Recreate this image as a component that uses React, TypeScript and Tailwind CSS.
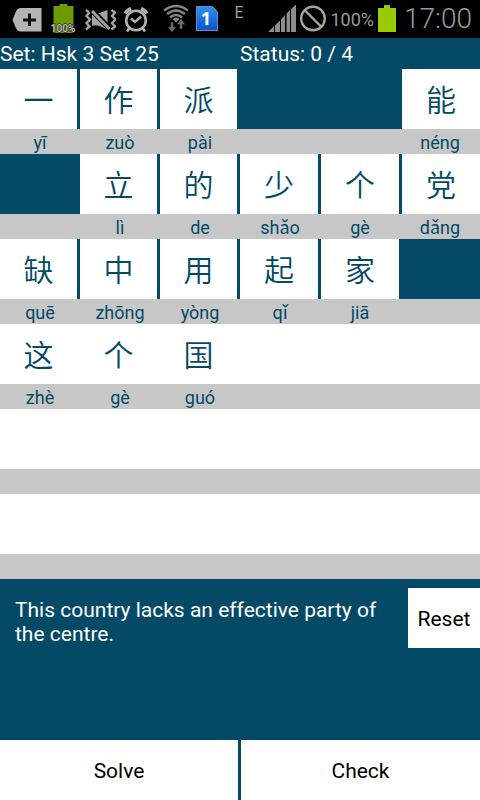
import React from "react";

type Tile = { char: string; pinyin: string } | null;

const t = (char: string, pinyin: string): Tile => ({ char, pinyin });

const POOL: Tile[][] = [
  [t("一", "yī"), t("作", "zuò"), t("派", "pài"), null, null, t("能", "néng")],
  [null, t("立", "lì"), t("的", "de"), t("少", "shǎo"), t("个", "gè"), t("党", "dǎng")],
  [t("缺", "quē"), t("中", "zhōng"), t("用", "yòng"), t("起", "qǐ"), t("家", "jiā"), null],
];

const ANSWER: Tile[][] = [
  [t("这", "zhè"), t("个", "gè"), t("国", "guó"), null, null, null],
  [null, null, null, null, null, null],
  [null, null, null, null, null, null],
];

function StatusBar() {
  return (
    <div className="flex h-[38px] items-center justify-between bg-black pl-3 pr-2 text-[#9a9a9a]">
      <div className="flex items-center gap-2">
        <svg width="30" height="38" viewBox="0 0 30 38" aria-hidden="true">
          <path d="M8 8H29.5V31.500H8Q5 31 3.500 27L0.500 20L3.500 12.500Q5 8.500 8 8Z" fill="#b4b4b4" />
          <path d="M17.500 13.500V26M11 20H24" stroke="#111" strokeWidth="3" />
        </svg>
        <svg width="26" height="38" viewBox="0 0 26 38" aria-hidden="true">
          <path d="M9.500 4H17.500V6H23.500V33H3.500V6H9.500Z" fill="#6d9a00" />
          <text x="13" y="32" textAnchor="middle" fontSize="10" fontWeight="500" fill="#c4c8b4" stroke="#333" strokeWidth="1.500" paintOrder="stroke">100%</text>
        </svg>
        <svg width="32" height="38" viewBox="0 0 32 38" fill="none" stroke="#a4a4a4" strokeWidth="2.400" aria-hidden="true">
          <path d="M2 10L5.500 12.500L2.500 16L6 19.500L2.500 23L5.500 26.500L2 29.500" />
          <path d="M27.500 10L31 12.500L28 16L31.500 19.500L28 23L31 26.500L27.500 29.500" />
          <path d="M8 13.500H14L23.500 10V29.500L14 25.500H8Z" fill="#a4a4a4" stroke="none" />
          <path d="M7 9.500L26 29" stroke="#000" strokeWidth="5.500" />
          <path d="M8 11L25.500 29" strokeWidth="2.800" />
        </svg>
        <svg width="24" height="38" viewBox="0 0 24 38" fill="none" stroke="#b0b0b0" aria-hidden="true">
          <circle cx="12" cy="20.500" r="9.800" strokeWidth="2.600" />
          <path d="M7 18.500L11 22L17 16.500" strokeWidth="2.400" />
          <path d="M1.200 13.500A14 14 0 0 1 7 8.500M17 8.500A14 14 0 0 1 22.800 13.500" strokeWidth="3.600" />
          <path d="M5.500 28L3 31.500M18.500 28L21 31.500" strokeWidth="2.800" />
        </svg>
        <svg width="32" height="38" viewBox="0 0 32 38" fill="none" stroke="#848484" strokeWidth="2.400" aria-hidden="true">
          <path d="M8 10.500Q20 1.500 32 10.500M11 14Q20 7 29 14M14 17.500Q20 12.500 26 17.500" />
          <path d="M16.500 19Q20 16 23.500 19L20 22.500Z" fill="#848484" stroke="none" />
          <path d="M14.500 22H17.500V27H20.500L16 32.500L11.500 27H14.500Z" fill="#6a6a6a" stroke="#000" strokeWidth="0.500" />
          <path d="M23.500 29V24.500H20.500L25 18.500L29.500 24.500H26.500V29Z" fill="#6a6a6a" stroke="#000" strokeWidth="0.500" />
        </svg>
        <svg width="22" height="38" viewBox="0 0 22 38" aria-hidden="true">
          <defs>
            <linearGradient id="sim" x1="0" y1="0" x2="0" y2="1">
              <stop offset="0" stopColor="#2f8df2" />
              <stop offset="1" stopColor="#0b55c8" />
            </linearGradient>
          </defs>
          <path d="M0.500 6.500H16.500L21.500 12V30.500H0.500Z" fill="url(#sim)" stroke="#5f8fc8" />
          <text x="10" y="25" textAnchor="middle" fontSize="18" fontWeight="700" fill="#fff" fontFamily="Open Sans, sans-serif">1</text>
        </svg>
        <span className="w-[26px] pb-3 text-center text-base leading-4">E</span>
      </div>
      <div className="flex items-center gap-1">
        <svg width="28" height="38" viewBox="0 0 28 38" fill="#8c8c8c" aria-hidden="true">
          <path d="M0 32L6 26V32ZM7 25.500L12 20.500V32H7ZM13 19.500L17 15V32H13ZM18.500 13.500L22 10V32H18.500ZM23 9L28 4.500V32H23Z" />
        </svg>
        <svg width="26" height="38" viewBox="1 0 26 38" fill="none" stroke="#a4a4a4" strokeWidth="2.400" aria-hidden="true">
          <circle cx="14" cy="18.500" r="11.800" />
          <path d="M5.500 10L22.500 27" />
        </svg>
        <span className="pt-px text-[18px] leading-6">100%</span>
        <svg width="18" height="38" viewBox="0 0 18 38" aria-hidden="true">
          <path d="M6 5H12V8H18V32H0V8H6Z" fill="#99cc00" />
        </svg>
        <span className="pl-1 text-[28px] font-light leading-8">17:00</span>
      </div>
    </div>
  );
}

function TileRow({ tiles, answer = false }: { tiles: Tile[]; answer?: boolean }) {
  return (
    <div>
      <div className={`grid h-[60px] grid-cols-[77fr_77fr_77fr_78fr_78fr_78fr] gap-[3px] ${answer ? "bg-white" : "bg-[#044a66]"}`}>
        {tiles.map((tile, i) =>
          tile ? (
            <button
              key={i}
              type="button"
              className="bg-white pb-[3px] font-['Noto_Sans_CJK_SC',sans-serif] text-[30px] font-[350] leading-none"
            >
              {tile.char}
            </button>
          ) : (
            <div key={i} />
          )
        )}
      </div>
      <div className="grid h-[25px] grid-cols-6 bg-[#c7c7c7] pt-[2px] text-center text-[18px] leading-6">
        {tiles.map((tile, i) => (
          <span key={i}>{tile?.pinyin}</span>
        ))}
      </div>
    </div>
  );
}

export default function App() {
  return (
    <div className="flex min-h-screen flex-col bg-[#044a66] font-[Roboto,'Noto_Sans_CJK_SC',sans-serif]">
      <StatusBar />
      <header className="grid h-[31px] grid-cols-2 items-center text-[21px] leading-6 text-white">
        <span>Set: Hsk 3 Set 25</span>
        <span>Status: 0 / 4</span>
      </header>
      <main lang="zh-CN" className="text-[#044a66]">
        {POOL.map((row, i) => (
          <TileRow key={i} tiles={row} />
        ))}
        {ANSWER.map((row, i) => (
          <TileRow key={i} tiles={row} answer />
        ))}
      </main>
      <section className="flex grow items-start pt-[9px]">
        <p className="grow py-[10px] pl-[15px] pr-4 text-[21px] leading-6 text-white">
          This country lacks an effective party of the centre.
        </p>
        <button type="button" className="h-[60px] w-[72px] shrink-0 bg-white pt-[3px] text-[21px] text-black">
          Reset
        </button>
      </section>
      <footer className="grid h-[60px] grid-cols-[238fr_239fr] gap-[3px] text-[21px] text-black">
        <button type="button" className="bg-white pt-[3px]">Solve</button>
        <button type="button" className="bg-white pt-[3px]">Check</button>
      </footer>
    </div>
  );
}
